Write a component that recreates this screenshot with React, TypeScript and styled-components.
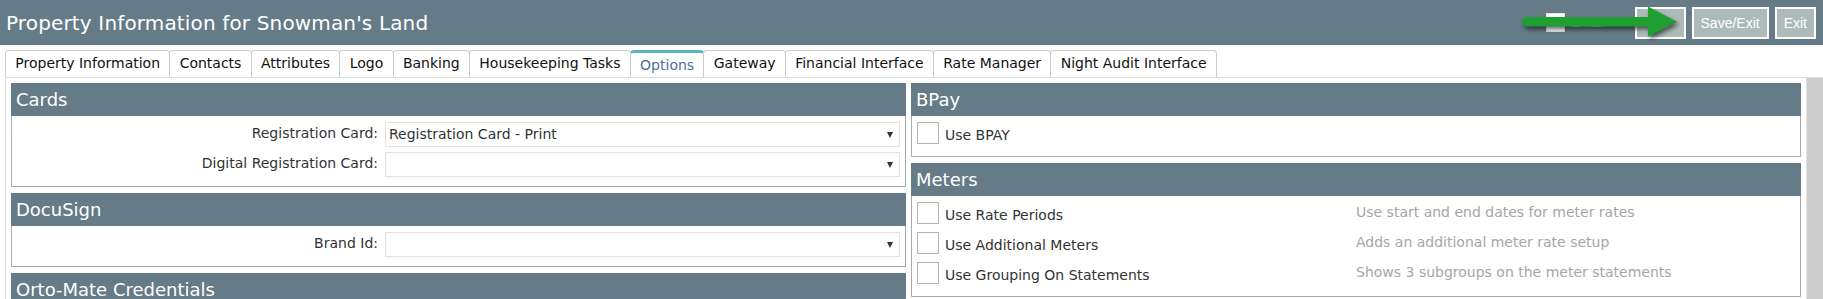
import styled, { createGlobalStyle } from "styled-components";

const GlobalStyle = createGlobalStyle`
  body {
    margin: 0;
    background: #fff;
    font-family: "DejaVu Sans", Verdana, sans-serif;
    font-size: 14px;
    color: #333;
  }
`;

const Page = styled.div`
  width: 1823px;
  height: 299px;
  overflow: hidden;
`;

const TopBar = styled.header`
  position: relative;
  height: 45px;
  background: #657b87;
  display: flex;
  align-items: center;
  justify-content: space-between;
  padding: 0 7px 0 6px;
  box-sizing: border-box;
`;

const Title = styled.h1`
  margin: 0;
  font-size: 20px;
  font-weight: normal;
  letter-spacing: 0.15px;
  color: #fff;
`;

const Actions = styled.div`
  display: flex;
  align-items: center;
  gap: 6px;
`;

const HeaderCheck = styled.label`
  display: flex;
  align-items: center;
  gap: 6px;
  margin-right: 25px;
  font-family: "Liberation Sans", Arial, sans-serif;
  font-size: 13px;
  color: #e8eef0;
`;

const HeaderBox = styled.span`
  width: 19px;
  height: 19px;
  background: #fff;
  border: 1px solid #dfe3e5;
  box-sizing: border-box;
`;

const ActionButton = styled.button<{ $width?: number }>`
  height: 32px;
  ${(p) => (p.$width ? `width: ${p.$width}px;` : "")}
  padding: 0 7px;
  border: 2px solid #fff;
  background: #aebab9;
  color: #fff;
  font-family: "Liberation Sans", Arial, sans-serif;
  font-size: 14px;
  cursor: pointer;
`;

const Arrow = styled.svg`
  position: absolute;
  top: 0;
  right: 133px;
  width: 180px;
  height: 45px;
  overflow: visible;
  filter: drop-shadow(2px 3px 2px rgba(0, 0, 0, 0.55));
  pointer-events: none;
`;

const TabStrip = styled.nav`
  display: flex;
  margin-top: 5px;
  padding-left: 5px;
`;

const Tab = styled.div<{ $active?: boolean }>`
  height: 27px;
  box-sizing: border-box;
  padding: 0 9.3px;
  margin-left: -1px;
  border: 1px solid #ccc;
  border-bottom: none;
  border-top: ${(p) => (p.$active ? "3px solid #5bb5bf" : "1px solid #ccc")};
  border-radius: 4px 4px 0 0;
  line-height: 25px;
  color: ${(p) => (p.$active ? "#4d7094" : "#111")};
  white-space: nowrap;
  &:first-child {
    margin-left: 0;
  }
`;

const Pane = styled.div`
  display: flex;
  margin-left: 5px;
  border-top: 1px solid #ddd;
  border-left: 1px solid #ddd;
`;

const Columns = styled.div`
  flex: 1;
  display: grid;
  grid-template-columns: 895px 890px;
  column-gap: 5px;
  align-items: start;
  padding: 5px 5px 0 5px;
`;

const Scrollbar = styled.div`
  width: 17px;
  background: #cdcdcd;
  border-left: 1px solid #e2e2e2;
  box-sizing: border-box;
`;

const Column = styled.div`
  display: flex;
  flex-direction: column;
  gap: 6px;
`;

const PanelHead = styled.div`
  height: 33px;
  line-height: 33px;
  padding: 0 5px;
  background: #657b87;
  color: #fff;
  font-size: 18px;
`;

const PanelBody = styled.div`
  border: 1px solid #a3adb0;
  border-top: none;
  padding: 6px 5px 4px;
`;

const FieldRow = styled.div`
  display: grid;
  grid-template-columns: 361px 1fr;
  column-gap: 7px;
  align-items: start;
  height: 30px;
`;

const FieldLabel = styled.span`
  text-align: right;
  line-height: 22px;
  color: #333;
`;

const SelectBox = styled.div`
  position: relative;
  height: 25px;
  box-sizing: border-box;
  border: 1px solid #e2e2e2;
  padding: 0 20px 0 3px;
  line-height: 23px;
  color: #333;
  &::after {
    content: "";
    position: absolute;
    right: 6px;
    top: 9px;
    border-left: 3px solid transparent;
    border-right: 3px solid transparent;
    border-top: 6px solid #333;
  }
`;

const CheckRow = styled.div`
  display: grid;
  grid-template-columns: 1fr 1fr;
  height: 30px;
`;

const CheckLabel = styled.label`
  display: flex;
  align-items: flex-start;
  gap: 6px;
  color: #333;
  span {
    padding-top: 2px;
    line-height: 22px;
  }
`;

const CheckBox = styled.span`
  width: 22px;
  height: 22px;
  flex: none;
  box-sizing: border-box;
  border: 1px solid #b3b3b3;
  background: #fff;
`;

const Hint = styled.span`
  line-height: 20px;
  color: #a6a6a6;
`;

const tabs = [
  "Property Information",
  "Contacts",
  "Attributes",
  "Logo",
  "Banking",
  "Housekeeping Tasks",
  "Options",
  "Gateway",
  "Financial Interface",
  "Rate Manager",
  "Night Audit Interface",
];

const meters = [
  ["Use Rate Periods", "Use start and end dates for meter rates"],
  ["Use Additional Meters", "Adds an additional meter rate setup"],
  ["Use Grouping On Statements", "Shows 3 subgroups on the meter statements"],
];

function Field({ label, value }: { label: string; value?: string }) {
  return (
    <FieldRow>
      <FieldLabel>{label}</FieldLabel>
      <SelectBox>{value}</SelectBox>
    </FieldRow>
  );
}

function App() {
  return (
    <Page>
      <GlobalStyle />
      <TopBar>
        <Title>Property Information for Snowman's Land</Title>
        <Actions>
          <HeaderCheck>
            <HeaderBox />
            Email
          </HeaderCheck>
          <ActionButton $width={51} />
          <ActionButton>Save/Exit</ActionButton>
          <ActionButton>Exit</ActionButton>
        </Actions>
        <Arrow viewBox="0 0 180 45">
          <rect x="12" y="17" width="131" height="9.5" rx="4.75" fill="#1f9e31" />
          <polygon points="138,6.5 167,21.7 138,36.5" fill="#1f9e31" />
        </Arrow>
      </TopBar>

      <TabStrip>
        {tabs.map((t) => (
          <Tab key={t} $active={t === "Options"}>
            {t}
          </Tab>
        ))}
      </TabStrip>

      <Pane>
        <Columns>
          <Column>
            <div>
              <PanelHead>Cards</PanelHead>
              <PanelBody>
                <Field label="Registration Card:" value="Registration Card - Print" />
                <Field label="Digital Registration Card:" />
              </PanelBody>
            </div>
            <div>
              <PanelHead>DocuSign</PanelHead>
              <PanelBody>
                <Field label="Brand Id:" />
              </PanelBody>
            </div>
            <div>
              <PanelHead>Orto-Mate Credentials</PanelHead>
              <PanelBody>
                <Field label="Username:" />
                <Field label="Password:" />
              </PanelBody>
            </div>
          </Column>
          <Column>
            <div>
              <PanelHead>BPay</PanelHead>
              <PanelBody>
                <CheckRow>
                  <CheckLabel>
                    <CheckBox />
                    <span>Use BPAY</span>
                  </CheckLabel>
                </CheckRow>
              </PanelBody>
            </div>
            <div>
              <PanelHead>Meters</PanelHead>
              <PanelBody>
                {meters.map(([label, hint]) => (
                  <CheckRow key={label}>
                    <CheckLabel>
                      <CheckBox />
                      <span>{label}</span>
                    </CheckLabel>
                    <Hint>{hint}</Hint>
                  </CheckRow>
                ))}
              </PanelBody>
            </div>
          </Column>
        </Columns>
        <Scrollbar />
      </Pane>
    </Page>
  );
}

export default App;
